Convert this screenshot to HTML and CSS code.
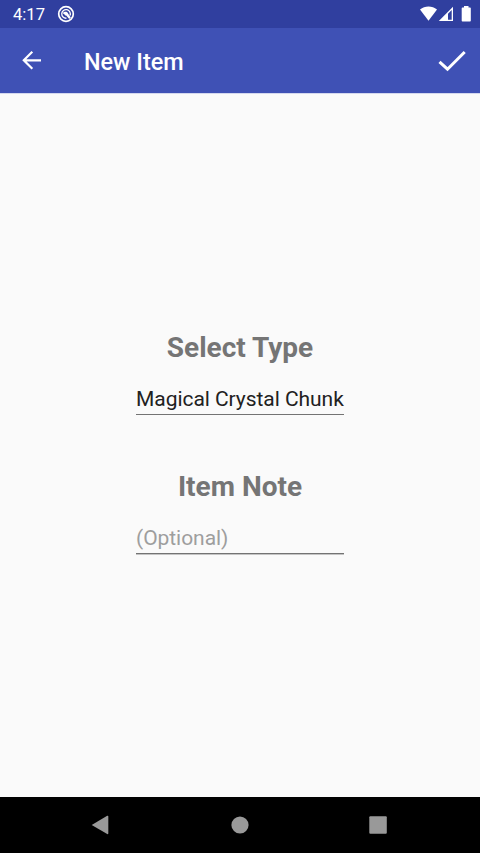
FILE: index.html
```html
<!DOCTYPE html>
<html lang="en">
<head>
<meta charset="utf-8">
<title>New Item</title>
<link rel="stylesheet" href="styles.css">
</head>
<body>
<div class="status">
  <span class="clock">4:17</span>
  <svg class="notice" width="18" height="18" viewBox="0 0 18 18" fill="none" stroke="#fff"><circle cx="9" cy="9" r="7.300" stroke-width="1.700"/><path d="M13 10.600A4.300 4.300 0 1 0 9.500 13.200" stroke-width="1.300"/><path d="M5.800 8.200C7.200 6.200 10.400 6.200 11.200 8.700L13.800 12.600L12.200 13.900L9.200 10.600C8 10.600 7.700 9.300 5.800 8.200Z" fill="#fff" stroke="none"/></svg>
  <svg class="signals" width="54" height="18" viewBox="0 0 54 18" fill="#fff"><path d="M2 4.500C6.800.5 14.200.5 19 4.500L10.500 15.800Z"/><path fill-rule="evenodd" d="M20.800 16L35 1.800V16ZM30 14.700H33.700V5L30 8.700Z"/><path d="M46 1h4.500v1.400h1.500q.8 0 .8.8V15.700q0 .8-.8.8H44.500q-.8 0-.8-.8V3.200q0-.8.8-.8H46Z"/></svg>
</div>
<header class="toolbar">
  <svg class="back" width="20" height="20" viewBox="0 0 20 20" fill="none" stroke="#fff" stroke-width="2.200"><path d="M19 10.300H2.500M10.300 1.800L1.800 10.300L10.300 18.800"/></svg>
  <h1 class="title">New Item</h1>
  <svg class="done" width="28" height="22" viewBox="0 0 28 22" fill="none" stroke="#fff" stroke-width="3"><path d="M1.500 11.800L9.500 19.200L26.700 2"/></svg>
</header>
<main class="form">
  <h2 class="label">Select Type</h2>
  <div class="field">Magical Crystal Chunk</div>
  <h2 class="label note">Item Note</h2>
  <div class="field hint">(Optional)</div>
</main>
<nav class="navbar">
  <svg width="20" height="20" viewBox="0 0 20 20"><path d="M1.700 10L17.200 .800Q18.300 .500 18.300 1.600V18.300Q18.300 19.400 17.200 19.100Z"/></svg>
  <svg width="20" height="20" viewBox="0 0 20 20"><circle cx="10" cy="10" r="8.600"/></svg>
  <svg width="20" height="20" viewBox="0 0 20 20"><rect x="1.300" y="1.200" width="17.500" height="17.500" rx="1"/></svg>
</nav>
</body>
</html>
```
FILE: styles.css
```css
* { box-sizing: border-box; }
body {
  margin: 0;
  height: 853px;
  display: flex;
  flex-direction: column;
  overflow: hidden;
  background: #fafafa;
  font-family: Roboto, "Liberation Sans", sans-serif;
}
svg { display: block; flex: none; }
.status {
  height: 28px;
  flex: none;
  display: flex;
  align-items: center;
  padding: 0 8px 0 13px;
  background: #303f9f;
  color: #fff;
}
.clock { width: 44px; font-size: 16.6px; line-height: 28px; padding-top: 1px; }
.signals { margin-left: auto; }
.toolbar {
  height: 65px;
  flex: none;
  display: flex;
  align-items: center;
  padding: 0 14px 0 22px;
  background: #3f51b5;
  color: #fff;
  box-shadow: 0 1px 0 #d4d8ee;
}
.back { margin-top: -1px; }
.title { margin: 2px 0 0 42px; font-size: 23.4px; line-height: 28px; font-weight: 500; }
.done { margin-left: auto; }
.form {
  flex: 1;
  display: flex;
  flex-direction: column;
  align-items: center;
  padding-top: 238px;
}
.label { margin: 0; font-size: 28px; line-height: 33px; font-weight: 700; color: #757575; }
.note { margin-top: 55px; }
.field {
  width: 208px;
  height: 32px;
  margin-top: 19px;
  border-bottom: 1px solid #737373;
  font-size: 21px;
  line-height: 33px;
  letter-spacing: -0.05px;
  white-space: nowrap;
  color: #212121;
}
.hint { line-height: 32px; color: #9e9e9e; box-shadow: 0 1px 0 #c4c4c4; }
.navbar {
  height: 56px;
  flex: none;
  display: flex;
  justify-content: space-between;
  align-items: center;
  padding: 0 92px 0 90px;
  background: #000;
  fill: #999;
}
.navbar svg:nth-child(2) { margin-left: 2px; }
```
